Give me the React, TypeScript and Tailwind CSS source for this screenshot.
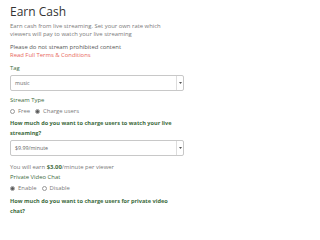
function Radio({ checked, label }: { checked?: boolean; label: string }) {
  return (
    <label className="flex items-center gap-[3px]">
      <span className="flex h-[5px] w-[5px] items-center justify-center rounded-full border border-[#999] bg-white">
        {checked && <span className="h-[3px] w-[3px] rounded-full bg-[#555]" />}
      </span>
      <span>{label}</span>
    </label>
  );
}

function Select({ value }: { value: string }) {
  return (
    <div className="flex h-[16px] w-[174px] items-stretch rounded-[2px] border border-[#c8c8c8] bg-white">
      <div className="flex flex-1 items-center pl-[4px] text-[5.3px] text-[#666]">{value}</div>
      <div className="flex w-[7px] items-center justify-center border-l border-[#ddd]">
        <svg width="3" height="2" viewBox="0 0 3 2">
          <path d="M0 0h3L1.5 2z" fill="#555" />
        </svg>
      </div>
    </div>
  );
}

export default function App() {
  return (
    <div
      className="h-[215px] w-[320px] overflow-hidden bg-white pl-[10px] pt-[5px] text-[5.9px] leading-[8px] text-[#7a7a7a]"
      style={{ fontFamily: '"Open Sans", "Liberation Sans", sans-serif' }}
    >
      <h1 className="text-[12px] leading-[14px] text-[#333]">Earn Cash</h1>
      <p className="mt-[3px] w-[160px]">
        Earn cash from live streaming. Set your own rate which viewers will pay to watch your live streaming
      </p>
      <p className="mt-[5px] text-[#555]">Please do not stream prohibited content</p>
      <a className="block text-[#e8665a]">Read Full Terms &amp; Conditions</a>

      <div className="w-[174px]">
        <div className="mt-[5px] text-[#3d6b3d]">Tag</div>
        <div className="mt-[3px]">
          <Select value="music" />
        </div>

        <div className="mt-[5px] text-[#3d6b3d]">Stream Type</div>
        <div className="mt-[3px] flex gap-[5px]">
          <Radio label="Free" />
          <Radio checked label="Charge users" />
        </div>

        <p className="mt-[3px] text-[5.6px] font-bold leading-[10px] text-[#3d6b3d]">
          How much do you want to charge users to watch your live streaming?
        </p>
        <div className="mt-[2px]">
          <Select value="$9.99/minute" />
        </div>

        <p className="mt-[7px]">
          You will earn <b className="text-[#3d6b3d]">$3.00</b>/minute per viewer
        </p>
        <div className="mt-[2px] text-[#3d6b3d]">Private Video Chat</div>
        <div className="mt-[3px] flex gap-[5px]">
          <Radio checked label="Enable" />
          <Radio label="Disable" />
        </div>

        <p className="mt-[4px] text-[5.6px] font-bold leading-[10px] text-[#3d6b3d]">
          How much do you want to charge users for private video chat?
        </p>
      </div>
    </div>
  );
}
